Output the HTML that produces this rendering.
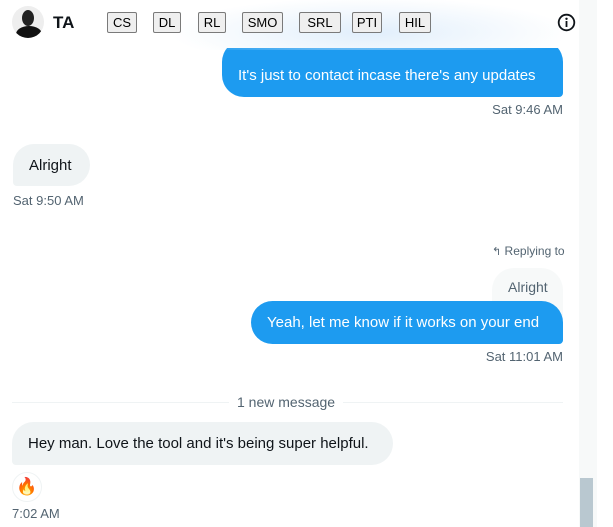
<!DOCTYPE html>
<html><head><meta charset="utf-8"><style>
*{margin:0;padding:0;box-sizing:border-box}
body{width:613px;height:527px;overflow:hidden;background:#fff;font-family:"Liberation Sans",sans-serif;position:relative;color:#0f1419}
.a{position:absolute}
.blue{background:#1d9bf0;color:#fff;font-size:15px;border-radius:22px 22px 4px 22px;padding:0 16px;display:flex;align-items:center}
.gray{background:#eff3f4;color:#0f1419;font-size:15px;border-radius:22px 22px 22px 4px;padding:0 16px;display:flex;align-items:center}
.t{font-size:13px;color:#536471}
.btn{position:absolute;top:12px;height:21px;border:1px solid #7a7a7a;border-radius:2px;background:#efefef;font-size:13px;color:#000;display:flex;align-items:center;justify-content:center}
</style></head><body>
<div class="a" style="left:579px;top:0;width:18px;height:527px;background:#f7f9f9"></div>
<div class="a" style="left:580px;top:478px;width:13px;height:49px;background:#b9c8d0"></div>

<div class="a blue" style="left:222px;top:40px;width:341px;height:57px;padding-top:14px">It's just to contact incase there's any updates</div>
<div class="a t" style="right:50px;top:102px">Sat 9:46 AM</div>

<div class="a gray" style="left:13px;top:144px;width:77px;height:42px">Alright</div>
<div class="a t" style="left:13px;top:193px">Sat 9:50 AM</div>

<div class="a t" style="left:492px;top:244px;font-size:12px"><span style="font-size:11px">&#x21B0;</span> Replying to</div>
<div class="a" style="left:492px;top:268px;width:71px;height:50px;background:#f7f9f9;border-radius:22px 22px 0 0;color:#536471;font-size:14px;padding:11px 0 0 16px">Alright</div>
<div class="a blue" style="left:251px;top:301px;width:312px;height:43px">Yeah, let me know if it works on your end</div>
<div class="a t" style="right:50px;top:349px">Sat 11:01 AM</div>

<div class="a" style="left:12px;top:402px;width:551px;height:1px;background:#eff3f4"></div>
<div class="a" style="left:229px;top:394px;background:#fff;padding:0 8px;font-size:14px;color:#536471">1 new message</div>

<div class="a gray" style="left:12px;top:422px;width:381px;height:43px">Hey man. Love the tool and it's being super helpful.</div>
<div class="a" style="left:12px;top:472px;width:30px;height:30px;border:1px solid #eff3f4;border-radius:50%;display:flex;align-items:center;justify-content:center;font-size:17px">🔥</div>
<div class="a t" style="left:12px;top:506px">7:02 AM</div>

<div class="a" style="left:0;top:0;width:579px;height:48px;background:#fff"></div>
<div class="a" style="left:170px;top:0;width:400px;height:50px;background:radial-gradient(ellipse 50% 70% at 50% 65%,rgba(215,233,250,0.75),rgba(255,255,255,0) 100%)"></div>
<div class="a" style="left:12px;top:6px;width:32px;height:32px;border-radius:50%;background:#eee;overflow:hidden">
<div class="a" style="left:10px;top:4px;width:12px;height:16px;border-radius:50%;background:#222"></div>
<div class="a" style="left:4px;top:20px;width:26px;height:16px;border-radius:50%;background:#111"></div></div>
<div class="a" style="left:53px;top:13px;font-size:17px;font-weight:bold">TA</div>
<div class="btn" style="left:107px;width:30px">CS</div>
<div class="btn" style="left:153px;width:28px">DL</div>
<div class="btn" style="left:198px;width:28px">RL</div>
<div class="btn" style="left:242px;width:41px">SMO</div>
<div class="btn" style="left:299px;width:42px">SRL</div>
<div class="btn" style="left:352px;width:30px">PTI</div>
<div class="btn" style="left:399px;width:32px">HIL</div>
<svg class="a" style="left:557px;top:13px" width="19" height="19" viewBox="0 0 19 19"><circle cx="9.5" cy="9.5" r="7.8" fill="none" stroke="#0f1419" stroke-width="1.8"/><circle cx="9.5" cy="5.8" r="1.2" fill="#0f1419"/><rect x="8.6" y="8" width="1.8" height="6" fill="#0f1419"/></svg>
</body></html>
